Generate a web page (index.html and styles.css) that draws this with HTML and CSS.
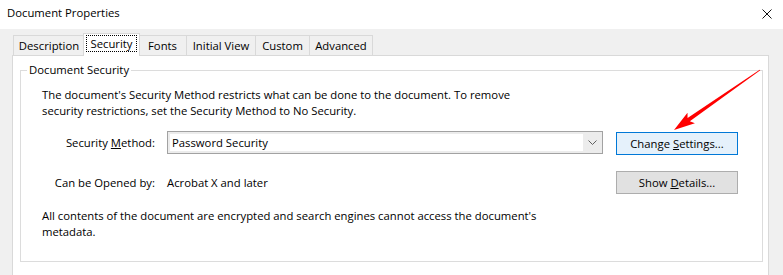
FILE: index.html
```html
<!DOCTYPE html>
<html>
<head>
<meta charset="utf-8">
<link rel="stylesheet" href="styles.css">
</head>
<body>
<div class="window">
  <div class="titlebar">
    <span class="title">Document Properties</span>
    <svg class="close" width="10" height="10" viewBox="0 0 10 10"><path d="M0.5 0.5 L9.5 9.5 M9.5 0.5 L0.5 9.5" stroke="#111" stroke-width="1" fill="none"/></svg>
  </div>
  <div class="content">
    <div class="tabs">
      <div class="tab t-desc">Description</div>
      <div class="tab selected t-sec"><span class="focus">Security</span></div>
      <div class="tab t-fonts">Fonts</div>
      <div class="tab t-init">Initial View</div>
      <div class="tab t-custom">Custom</div>
      <div class="tab t-adv">Advanced</div>
    </div>
    <div class="panel">
      <fieldset class="group">
        <legend>Document Security</legend>
        <div class="group-body">
          <p class="para">The document's Security Method restricts what can be done to the document. To remove<br>security restrictions, set the Security Method to No Security.</p>
          <div class="form">
            <span class="lbl">Security <u>M</u>ethod:</span>
            <div class="combo">
              <div class="field">Password Security</div>
              <div class="drop"><svg width="9" height="5" viewBox="0 0 9 5"><path d="M0.5 0.5 L4.5 4.5 L8.5 0.5" stroke="#606060" fill="none" stroke-width="1"/></svg></div>
            </div>
            <button class="btn btn-default r1">Change <u>S</u>ettings...</button>
            <span class="lbl r2">Can be Opened by:</span>
            <span class="val r2">Acrobat X and later</span>
            <button class="btn r2">Show <u>D</u>etails...</button>
          </div>
          <p class="para para2">All contents of the document are encrypted and search engines cannot access the document's<br>metadata.</p>
        </div>
      </fieldset>
    </div>
  </div>
  <svg class="arrow" width="783" height="275" viewBox="0 0 783 275">
    <polygon points="760.3,70.3 689.84,121.34 694.9,123.3 674,130 687.5,112.7 687.56,118.06 759.7,69.7" fill="#f00"/>
  </svg>
</div>
</body>
</html>
```
FILE: styles.css
```css
html, body {
  margin: 0;
  padding: 0;
}
body {
  width: 783px;
  height: 275px;
  overflow: hidden;
  background: #f0f0f0;
  font-family: "Open Sans", "Noto Sans", sans-serif;
  font-size: 11.3px;
  color: #000;
}
.window {
  position: relative;
  height: 275px;
  overflow: hidden;
}
.titlebar {
  height: 29px;
  background: #fff;
  display: flex;
  align-items: center;
  justify-content: space-between;
  box-sizing: border-box;
  padding: 0 11px 3px 7px;
}
.title {
  font-size: 11.3px;
  line-height: 16px;
}
.close {
  display: block;
  margin-top: 2px;
}
.content {
  padding: 4px 0 0 12px;
}
.tabs {
  display: flex;
  height: 23px;
  margin-bottom: -1px;
  padding-left: 1px;
  position: relative;
  z-index: 1;
}
.tab {
  box-sizing: border-box;
  height: 20px;
  margin-top: 2px;
  border: 1px solid #d9d9d9;
  border-bottom: none;
  background: #f0f0f0;
  display: flex;
  align-items: center;
  justify-content: center;
  line-height: 16px;
  margin-left: -1px;
}
.t-desc { width: 72px; margin-left: 0; }
.t-sec { width: 57px; margin-left: -2px; margin-right: -2px; }
.t-fonts { width: 49px; margin-left: 0; }
.t-init { width: 70px; }
.t-custom { width: 55px; }
.t-adv { width: 64px; }
.tab.selected {
  height: 23px;
  margin-top: 0;
  background: #fff;
  position: relative;
  z-index: 2;
  padding-bottom: 4px;
}
.focus {
  border: 1px dotted #000;
  padding: 0 3px;
  line-height: 15px;
}
.panel {
  box-sizing: border-box;
  width: 757px;
  height: 220px;
  background: #fff;
  border: 1px solid #d9d9d9;
  border-bottom: none;
  padding-top: 6px;
}
.group {
  margin: 0 5px 0 7px;
  padding: 0;
  border: 1px solid #dcdcdc;
  min-width: 0;
}
.group legend {
  margin-left: 6px;
  padding: 0 2px;
  line-height: 16px;
}
.group-body {
  padding: 9px 0 21px 21px;
}
.para {
  margin: 0;
  line-height: 16px;
}
.form {
  display: grid;
  grid-template-columns: 113px 436px 123px;
  grid-template-rows: 24px 23px;
  column-gap: 12px;
  row-gap: 16px;
  margin-top: 12px;
}
.lbl {
  justify-self: end;
  align-self: center;
  line-height: 16px;
}
.val {
  align-self: center;
  line-height: 16px;
}
.combo {
  box-sizing: border-box;
  height: 23px;
  align-self: start;
  border: 1px solid #a2a2a2;
  background: #ececec;
  display: flex;
  padding: 2px 0 2px 2px;
}
.field {
  flex: 1;
  background: #fff;
  padding-left: 2px;
  line-height: 17px;
}
.drop {
  width: 19px;
  display: flex;
  align-items: center;
  justify-content: center;
}
.drop svg {
  display: block;
}
.btn {
  box-sizing: border-box;
  height: 23px;
  margin: 0 0 0 1px;
  padding: 0;
  font-family: inherit;
  font-size: 11.3px;
  color: #000;
  background: #e1e1e1;
  border: 1px solid #adadad;
  border-radius: 0;
  line-height: 16px;
}
.btn.r1 {
  align-self: end;
}
.btn-default {
  background: #e5f1fb;
  border-color: #0078d7;
}
.para2 {
  margin-top: 14px;
}
.arrow {
  position: absolute;
  left: 0;
  top: 0;
  pointer-events: none;
}
```
